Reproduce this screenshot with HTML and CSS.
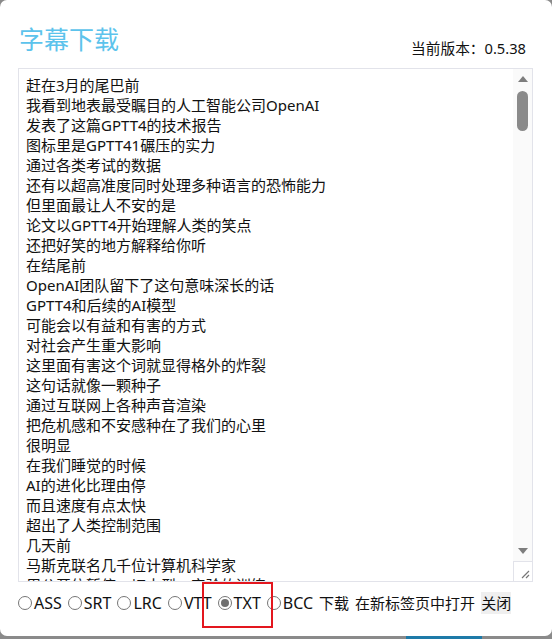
FILE: index.html
```html
<!DOCTYPE html>
<html lang="zh-CN">
<head>
<meta charset="utf-8">
<title>字幕下载</title>
<link rel="stylesheet" href="styles.css">
</head>
<body>
<div class="dialog">
  <div class="header">
    <h1 class="title">字幕下载</h1>
    <div class="version">当前版本：0.5.38</div>
  </div>
  <div class="textbox">
    <div class="text">赶在3月的尾巴前
我看到地表最受瞩目的人工智能公司OpenAI
发表了这篇GPTT4的技术报告
图标里是GPTT41碾压的实力
通过各类考试的数据
还有以超高准度同时处理多种语言的恐怖能力
但里面最让人不安的是
论文以GPTT4开始理解人类的笑点
还把好笑的地方解释给你听
在结尾前
OpenAI团队留下了这句意味深长的话
GPTT4和后续的AI模型
可能会以有益和有害的方式
对社会产生重大影响
这里面有害这个词就显得格外的炸裂
这句话就像一颗种子
通过互联网上各种声音渲染
把危机感和不安感种在了我们的心里
很明显
在我们睡觉的时候
AI的进化比理由停
而且速度有点太快
超出了人类控制范围
几天前
马斯克联名几千位计算机科学家
用公开信暂停一切大型AI实验的训练
</div>
    <div class="scrollbar">
      <div class="sb-btn"><span class="arrow-up"></span></div>
      <div class="sb-track"><div class="sb-thumb"></div></div>
      <div class="sb-btn"><span class="arrow-down"></span></div>
      <div class="resizer">
        <svg width="10" height="10" viewBox="0 0 10 10"><path d="M9 2 L2 9 M9 6 L6 9" stroke="#777" stroke-width="1.2" fill="none"/></svg>
      </div>
    </div>
  </div>
  <div class="controls">
    <label class="radio"><span class="dot"></span><span class="lbl">ASS</span></label>
    <label class="radio"><span class="dot"></span><span class="lbl">SRT</span></label>
    <label class="radio"><span class="dot"></span><span class="lbl">LRC</span></label>
    <label class="radio"><span class="dot"></span><span class="lbl">VTT</span></label>
    <label class="radio checked"><span class="dot"></span><span class="lbl">TXT</span></label>
    <label class="radio"><span class="dot"></span><span class="lbl">BCC</span></label>
    <span class="btn">下载</span>
    <span class="btn">在新标签页中打开</span>
    <span class="btn close">关闭</span>
  </div>
  <div class="highlight"></div>
</div>
<div class="bottom-strip"><span class="seg gray1"></span><span class="seg blue"></span><span class="seg gray2"></span></div>
</body>
</html>
```

FILE: styles.css
```css
html, body {
  margin: 0;
  padding: 0;
}
body {
  width: 552px;
  height: 639px;
  overflow: hidden;
  background: #8a8a8a;
  font-family: "Noto Sans", "Noto Sans CJK SC", sans-serif;
  color: #1a1a1a;
}
.dialog {
  position: relative;
  height: 636px;
  background: #ffffff;
  border-radius: 7px;
  padding: 0 19px 0 18px;
  box-sizing: border-box;
}
.header {
  display: flex;
  justify-content: space-between;
  align-items: flex-end;
  padding-top: 20px;
  height: 56px;
  box-sizing: border-box;
}
.title {
  margin: 0;
  padding-left: 1px;
  font-family: "Noto Sans CJK SC", sans-serif;
  font-weight: 400;
  font-size: 25px;
  line-height: 36px;
  color: #5cc3ec;
}
.version {
  font-family: "Noto Sans", "Noto Sans CJK SC", sans-serif;
  font-size: 14.7px;
  line-height: 20px;
  margin-bottom: -2px;
  padding-right: 7px;
  color: #111;
}
.textbox {
  margin-top: 12px;
  height: 514px;
  border: 1px solid #e2e3ea;
  box-sizing: border-box;
  display: flex;
}
.text {
  flex: 1;
  overflow: hidden;
  white-space: pre-line;
  padding: 6px 0 0 7px;
  font-size: 15px;
  line-height: 20px;
  color: #111;
}
.scrollbar {
  width: 19px;
  background: #fafafa;
  display: flex;
  flex-direction: column;
}
.sb-btn {
  height: 20px;
  display: flex;
  align-items: center;
  justify-content: center;
}
.arrow-up {
  width: 0;
  height: 0;
  border-left: 5.5px solid transparent;
  border-right: 5.5px solid transparent;
  border-bottom: 6px solid #7d7d7d;
}
.arrow-down {
  width: 0;
  height: 0;
  border-left: 5.5px solid transparent;
  border-right: 5.5px solid transparent;
  border-top: 6px solid #7d7d7d;
}
.sb-track {
  flex: 1;
  display: flex;
  justify-content: center;
}
.sb-thumb {
  margin-top: 2px;
  width: 11px;
  height: 40px;
  border-radius: 6px;
  background: #8a8a8a;
}
.resizer {
  height: 20px;
  background: #ffffff;
  border-top: 1px solid #e2e3ea;
  border-left: 1px solid #e2e3ea;
  box-sizing: border-box;
  display: flex;
  align-items: flex-end;
  justify-content: flex-end;
  padding: 0 2px 2px 0;
}
.controls {
  display: flex;
  align-items: center;
  margin-top: 10px;
  height: 22px;
  font-size: 15px;
  line-height: 22px;
  color: #111;
}
.radio {
  display: flex;
  align-items: center;
  margin-right: 6px;
}
.lbl {
  font-size: 16px;
}
.dot {
  width: 14px;
  height: 14px;
  border: 1px solid #767676;
  border-radius: 50%;
  box-sizing: border-box;
  margin-right: 2px;
  display: flex;
  align-items: center;
  justify-content: center;
  background: #fff;
}
.checked .dot::after {
  content: "";
  width: 8px;
  height: 8px;
  border-radius: 50%;
  background: #6f6f6f;
}
.btn {
  font-family: "Noto Sans CJK SC", sans-serif;
  margin-right: 6px;
}
.close {
  background: #efefef;
  margin-right: 0;
}
.highlight {
  position: absolute;
  left: 202px;
  top: 582px;
  width: 71px;
  height: 46px;
  border: 2px solid #e3161e;
  box-sizing: border-box;
}
.bottom-strip {
  display: flex;
  height: 3px;
}
.seg.gray1 { width: 406px; background: #8a8a8a; }
.seg.blue { width: 76px; background: #1e7aa8; }
.seg.gray2 { flex: 1; background: #8a8a8a; }
```
